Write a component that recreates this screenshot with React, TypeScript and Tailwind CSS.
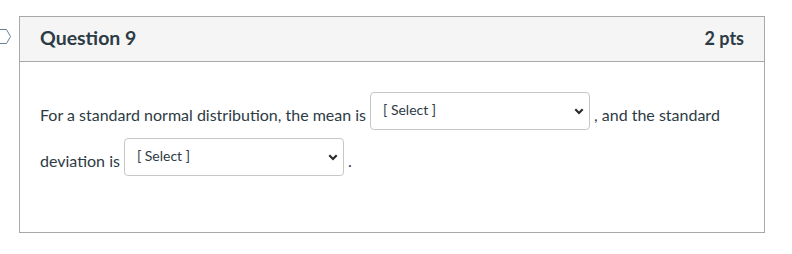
import { ChangeEvent, useState } from "react";

const options = ["[ Select ]", "0", "1", "-1", "undefined"];

function AnswerSelect({ value, onChange }: { value: string; onChange: (value: string) => void }) {
  return (
    <span className="relative mx-[4px] mb-[8px] inline-block h-[38px] w-[220px] align-top">
      <select
        value={value}
        onChange={(event: ChangeEvent<HTMLSelectElement>) => onChange(event.target.value)}
        className="block h-full w-full appearance-none rounded-[4px] border border-[#c7c7c7] bg-white pl-[12px] pr-8 pb-[4px] text-[14px] leading-normal text-[#2d3b45] outline-none"
      >
        {options.map((option) => (
          <option key={option} value={option}>
            {option}
          </option>
        ))}
      </select>
      <svg className="pointer-events-none absolute right-[6px] top-[16px] block" width="10" height="7" viewBox="0 0 10 7">
        <path d="M1.3 1.3 L5 5 L8.7 1.3" fill="none" stroke="#2b2b2b" strokeWidth="2.2" />
      </svg>
    </span>
  );
}

export default function App() {
  const [mean, setMean] = useState("[ Select ]");
  const [deviation, setDeviation] = useState("[ Select ]");

  return (
    <div className="h-[254px] w-[792px] bg-white pt-[16px] font-['Lato',sans-serif] text-[#2d3b45]">
      <div className="flex">
        <div className="w-[19px] shrink-0 pt-[13px]">
          <svg width="12" height="16" viewBox="0 0 12 16">
            <path d="M-2 0.5 H6.5 L10.5 7.5 L6.5 14.5 H-2" fill="none" stroke="#6c7f93" strokeWidth="1" />
          </svg>
        </div>
        <div className="w-[746px] border border-[#a8a8a8]">
          <div className="flex h-[45px] items-center justify-between border-b border-[#a8a8a8] bg-[#f5f5f5] px-[20px] pb-[2px]">
            <h2 className="text-[19.5px] font-bold">Question 9</h2>
            <span className="text-[18px] font-bold">2 pts</span>
          </div>
          <div className="px-[20px] pt-[30px] pb-[48px] text-[16px] leading-[46px]">
            <p>
              For a standard normal distribution, the mean is
              <AnswerSelect value={mean} onChange={setMean} />, and the standard deviation is
              <AnswerSelect value={deviation} onChange={setDeviation} />.
            </p>
          </div>
        </div>
      </div>
    </div>
  );
}
